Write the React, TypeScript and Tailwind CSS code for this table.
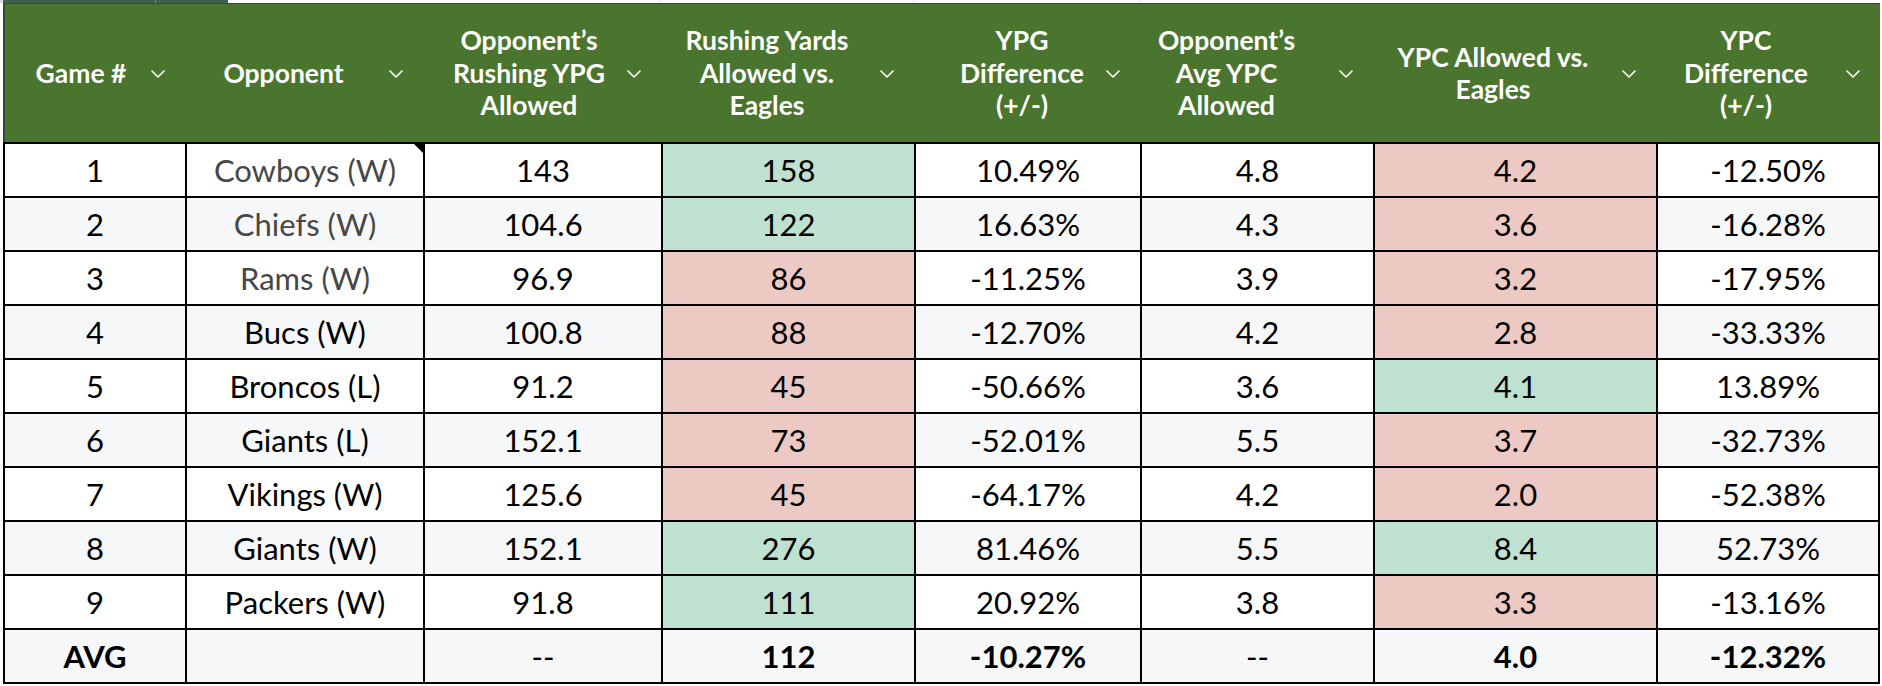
import React from "react";

type Tone = "g" | "r" | undefined;

type Row = {
  game: string;
  opp: string;
  oppMuted?: boolean;
  ypg: string;
  yds: string;
  ydsTone?: Tone;
  ypgDiff: string;
  avgYpc: string;
  ypc: string;
  ypcTone?: Tone;
  ypcDiff: string;
};

const rows: Row[] = [
  { game: "1", opp: "Cowboys (W)", oppMuted: true, ypg: "143", yds: "158", ydsTone: "g", ypgDiff: "10.49%", avgYpc: "4.8", ypc: "4.2", ypcTone: "r", ypcDiff: "-12.50%" },
  { game: "2", opp: "Chiefs (W)", oppMuted: true, ypg: "104.6", yds: "122", ydsTone: "g", ypgDiff: "16.63%", avgYpc: "4.3", ypc: "3.6", ypcTone: "r", ypcDiff: "-16.28%" },
  { game: "3", opp: "Rams (W)", oppMuted: true, ypg: "96.9", yds: "86", ydsTone: "r", ypgDiff: "-11.25%", avgYpc: "3.9", ypc: "3.2", ypcTone: "r", ypcDiff: "-17.95%" },
  { game: "4", opp: "Bucs (W)", ypg: "100.8", yds: "88", ydsTone: "r", ypgDiff: "-12.70%", avgYpc: "4.2", ypc: "2.8", ypcTone: "r", ypcDiff: "-33.33%" },
  { game: "5", opp: "Broncos (L)", ypg: "91.2", yds: "45", ydsTone: "r", ypgDiff: "-50.66%", avgYpc: "3.6", ypc: "4.1", ypcTone: "g", ypcDiff: "13.89%" },
  { game: "6", opp: "Giants (L)", ypg: "152.1", yds: "73", ydsTone: "r", ypgDiff: "-52.01%", avgYpc: "5.5", ypc: "3.7", ypcTone: "r", ypcDiff: "-32.73%" },
  { game: "7", opp: "Vikings (W)", ypg: "125.6", yds: "45", ydsTone: "r", ypgDiff: "-64.17%", avgYpc: "4.2", ypc: "2.0", ypcTone: "r", ypcDiff: "-52.38%" },
  { game: "8", opp: "Giants (W)", ypg: "152.1", yds: "276", ydsTone: "g", ypgDiff: "81.46%", avgYpc: "5.5", ypc: "8.4", ypcTone: "g", ypcDiff: "52.73%" },
  { game: "9", opp: "Packers (W)", ypg: "91.8", yds: "111", ydsTone: "g", ypgDiff: "20.92%", avgYpc: "3.8", ypc: "3.3", ypcTone: "r", ypcDiff: "-13.16%" },
];

// header text is centred in what's left after the filter chevron; offsets read off the screenshot
const headers: { lines: string[]; offset: string }[] = [
  { lines: ["Game #"], offset: "pl-[6px]" },
  { lines: ["Opponent"], offset: "pr-[9px]" },
  { lines: ["Opponent\u2019s", "Rushing YPG", "Allowed"], offset: "pl-[6px]" },
  { lines: ["Rushing Yards", "Allowed vs.", "Eagles"], offset: "pr-[9px]" },
  { lines: ["YPG", "Difference", "(+/-)"], offset: "pl-[22px]" },
  { lines: ["Opponent\u2019s", "Avg YPC", "Allowed"], offset: "pr-[28px]" },
  { lines: ["YPC Allowed vs.", "Eagles"], offset: "pr-[11px]" },
  { lines: ["YPC", "Difference", "(+/-)"], offset: "pr-[12px]" },
];

const gridCols = "grid grid-cols-[182px_238px_238px_253px_226px_233px_283px_224px]";

function Chevron() {
  return (
    <svg width="14" height="8" viewBox="0 0 14 8" fill="none" className="shrink-0 mt-[2px]">
      <path d="M1 1l6 6 6-6" stroke="white" strokeWidth="1.6" strokeLinecap="round" strokeLinejoin="round" />
    </svg>
  );
}

function toneBg(t: Tone) {
  if (t === "g") return "bg-[#bfe1d0]";
  if (t === "r") return "bg-[#edc9c4]";
  return "";
}

function Cell({
  children,
  tone,
  last,
  className = "",
}: {
  children?: React.ReactNode;
  tone?: Tone;
  last?: boolean;
  className?: string;
}) {
  return (
    <div
      className={`flex items-center justify-center border-l-2 border-t-2 border-black ${last ? "border-r-2" : ""} ${toneBg(tone)} ${className}`}
    >
      {children}
    </div>
  );
}

export default function App() {
  return (
    <div className="w-[1882px] h-[686px] bg-white overflow-hidden font-['Lato',sans-serif] text-black">
      {/* bit of the sheet tab strip peeking in above the table */}
      <div className="flex h-[3px]">
        <div className="w-[3px] bg-[#dcdcdc]" />
        <div className="w-[152px] bg-[#40604f]" />
        <div className="w-[1px] bg-[#6f8a7e]" />
        <div className="w-[72px] bg-[#40604f]" />
        <div className="w-[433px] border-r border-[#e2e2e2]" />
        <div className="w-[253px] border-r border-[#e2e2e2]" />
        <div className="w-[226px] border-r border-[#e2e2e2]" />
        <div className="flex-1" />
      </div>

      <div className="ml-[3px] w-[1877px]">
        {/* Header */}
        <div className={`${gridCols} h-[139px] bg-[#4a752f] border-t border-l-2 border-[#2e4c41] text-white font-bold text-[26.5px] leading-[32.5px]`}>
          {headers.map((h, i) => (
            <div key={i} className="flex items-center pr-[22px]">
              <div className={`flex-1 text-center ${h.offset}`}>
                {h.lines.map((l, j) => (
                  <div key={j} className="whitespace-nowrap">{l}</div>
                ))}
              </div>
              <Chevron />
            </div>
          ))}
        </div>

        {/* Body */}
        <div className="border-b-2 border-black text-[31px]">
          {rows.map((r, i) => (
            <div key={r.game} className={`${gridCols} h-[54px] ${i % 2 === 1 ? "bg-[#f6f7f9]" : "bg-white"}`}>
              <Cell>{r.game}</Cell>
              <Cell className={`relative ${r.oppMuted ? "text-[#474747]" : ""}`}>
                {r.opp}
                {i === 0 && (
                  <span className="absolute top-0 right-0 w-0 h-0 border-l-[9px] border-l-transparent border-t-[9px] border-t-black" />
                )}
              </Cell>
              <Cell>{r.ypg}</Cell>
              <Cell tone={r.ydsTone}>{r.yds}</Cell>
              <Cell>{r.ypgDiff}</Cell>
              <Cell>{r.avgYpc}</Cell>
              <Cell tone={r.ypcTone}>{r.ypc}</Cell>
              <Cell last>{r.ypcDiff}</Cell>
            </div>
          ))}
          <div className={`${gridCols} h-[54px] bg-[#f6f7f9]`}>
            <Cell className="font-bold">AVG</Cell>
            <Cell />
            <Cell>--</Cell>
            <Cell className="font-bold">112</Cell>
            <Cell className="font-bold">-10.27%</Cell>
            <Cell>--</Cell>
            <Cell className="font-bold">4.0</Cell>
            <Cell last className="font-bold">-12.32%</Cell>
          </div>
        </div>
      </div>
    </div>
  );
}
